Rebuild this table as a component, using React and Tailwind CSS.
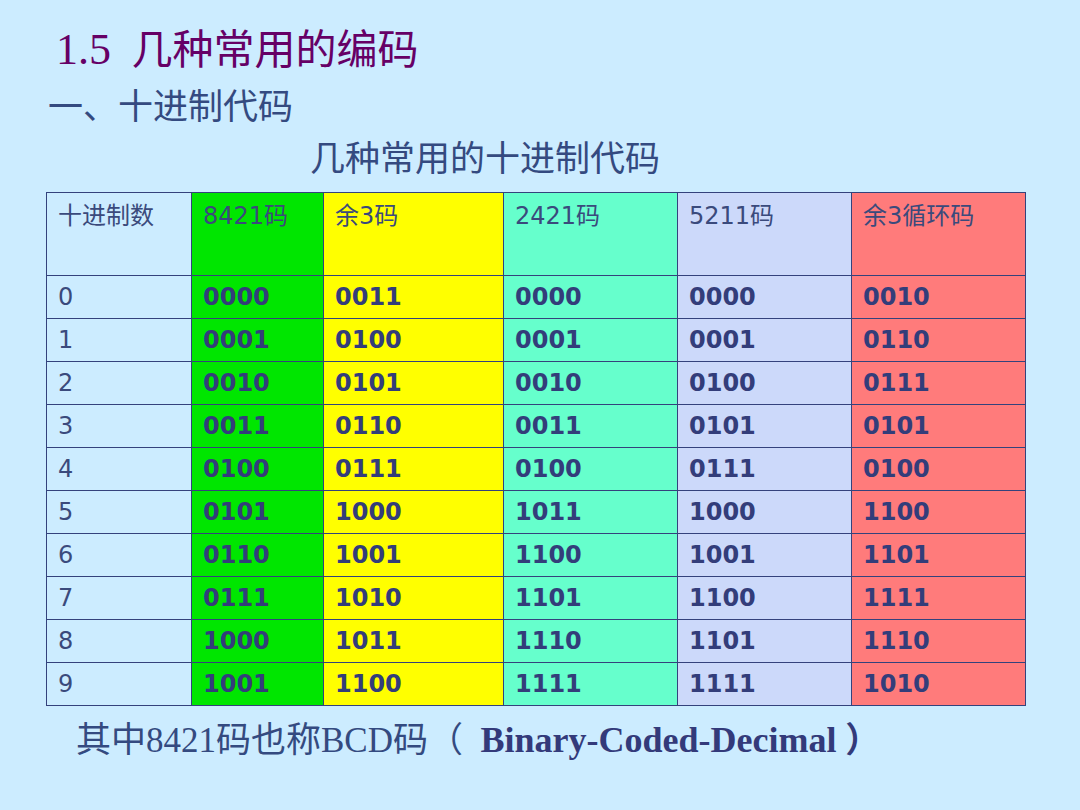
import React from 'react';

const columns = [
  { label: '十进制数', bg: 'bg-[#ccecff]', w: 'w-[145px]' },
  { label: '8421码', bg: 'bg-[#00e600]', w: 'w-[132px]' },
  { label: '余3码', bg: 'bg-[#ffff00]', w: 'w-[180px]' },
  { label: '2421码', bg: 'bg-[#66ffcc]', w: 'w-[174px]' },
  { label: '5211码', bg: 'bg-[#ccd9fa]', w: 'w-[174px]' },
  { label: '余3循环码', bg: 'bg-[#ff7b7b]', w: 'w-[174px]' },
];

const rows = [
  ['0', '0000', '0011', '0000', '0000', '0010'],
  ['1', '0001', '0100', '0001', '0001', '0110'],
  ['2', '0010', '0101', '0010', '0100', '0111'],
  ['3', '0011', '0110', '0011', '0101', '0101'],
  ['4', '0100', '0111', '0100', '0111', '0100'],
  ['5', '0101', '1000', '1011', '1000', '1100'],
  ['6', '0110', '1001', '1100', '1001', '1101'],
  ['7', '0111', '1010', '1101', '1100', '1111'],
  ['8', '1000', '1011', '1110', '1101', '1110'],
  ['9', '1001', '1100', '1111', '1111', '1010'],
];

const serif = 'font-["Liberation_Serif","Noto_Sans_CJK_SC",serif]';
const sans = 'font-["DejaVu_Sans","Noto_Sans_CJK_SC",sans-serif]';

export default function App() {
  return (
    <div className="w-[1080px] h-[810px] bg-[#ccecff] overflow-hidden">
      <div className="pt-[26px]">
        <h1 className={`${serif} pl-[56px] text-[41px] leading-[48px] text-[#660066]`}>
          <span className="text-[44px]">1.5</span>&nbsp;&nbsp;几种常用的编码
        </h1>
        <h2 className={`${serif} pl-[48px] mt-[14px] text-[35px] leading-[40px] text-[#344a80]`}>
          一、十进制代码
        </h2>
        <p className={`${serif} pl-[310px] mt-[12px] text-[35px] leading-[40px] text-[#344a80]`}>
          几种常用的十进制代码
        </p>

        {/* code table */}
        <table className={`${sans} ml-[46px] mt-[12px] border-collapse`}>
          <thead>
            <tr className="h-[83px]">
              {columns.map((c) => (
                <th
                  key={c.label}
                  className={`${c.bg} ${c.w} border border-[#34427c] align-top text-left font-normal pl-[11px] pt-[8px] text-[24px] leading-[30px] text-[#3a4a7c]`}
                >
                  {c.label}
                </th>
              ))}
            </tr>
          </thead>
          <tbody>
            {rows.map((r, i) => (
              <tr key={i} className="h-[43px]">
                {r.map((v, j) => (
                  <td
                    key={j}
                    className={`${columns[j].bg} border border-[#34427c] pl-[11px] text-[24px] leading-[30px] ${
                      j === 0 ? 'font-normal text-[#3a4a7c]' : 'font-bold text-[#333d7a]'
                    }`}
                  >
                    {v}
                  </td>
                ))}
              </tr>
            ))}
          </tbody>
        </table>

        <p className={`${serif} pl-[76px] mt-[14px] text-[35px] leading-[40px] text-[#344a80]`}>
          其中8421码也称BCD码（&nbsp;&nbsp;
          <span className="font-bold text-[#333a7a] text-[36px]">Binary-Coded-Decimal</span>{' '}
          <span className="font-bold text-[#333a7a]">）</span>
        </p>
      </div>
    </div>
  );
}
